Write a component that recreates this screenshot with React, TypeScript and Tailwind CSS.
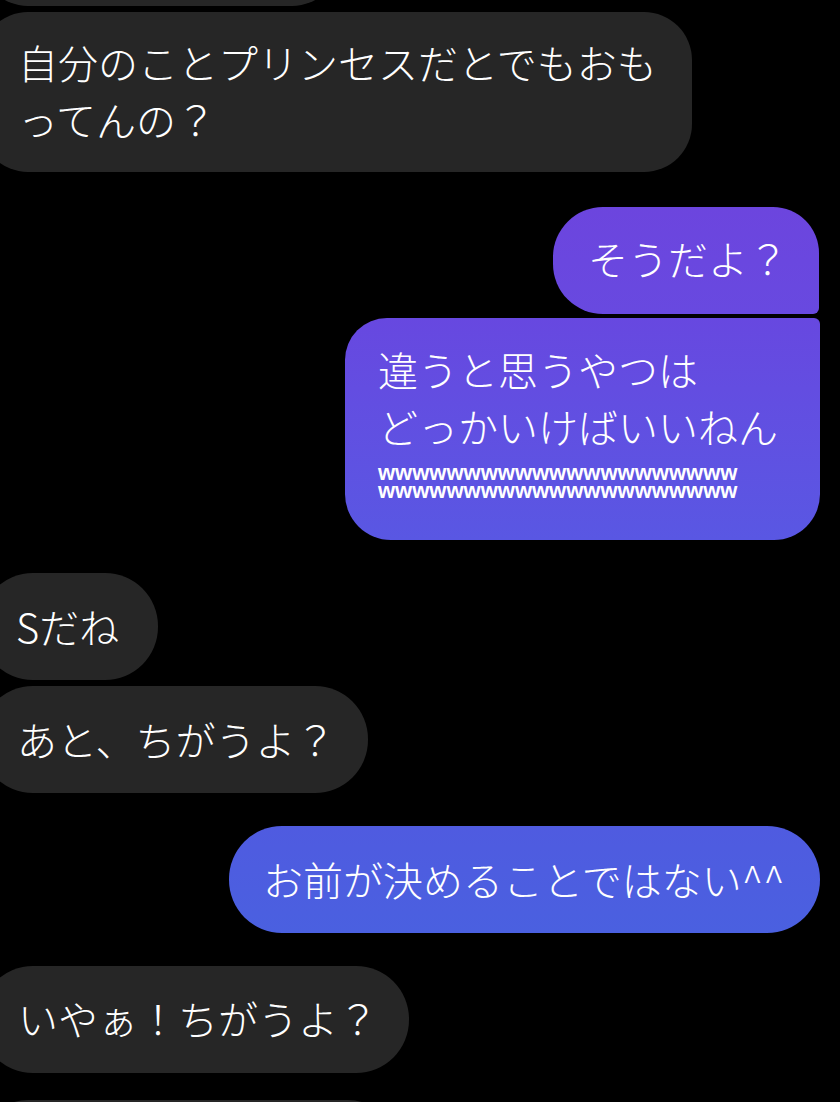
import React from "react";

const font = {
  fontFamily: '"Noto Sans CJK JP", "Noto Sans", sans-serif',
};

export default function App() {
  return (
    <div
      className="w-[840px] h-[1102px] bg-black overflow-hidden flex flex-col text-white text-[40px] leading-[57px] font-light"
      style={font}
    >
      {/* partial bubble at top */}
      <div className="self-start ml-[-20px] mt-[-94px] w-[360px] h-[100px] rounded-[48px] bg-[#262626] shrink-0" />

      {/* B */}
      <div className="self-start ml-[-20px] mt-[6px] w-[712px] h-[160px] shrink-0 rounded-[48px] bg-[#262626] pl-[38px] pt-[22px]">
        自分のことプリンセスだとでもおも
        <br />
        ってんの？
      </div>

      {/* C */}
      <div className="self-end mr-[21px] mt-[35px] w-[266px] h-[107px] shrink-0 flex items-center pl-[35px] pb-[4px] rounded-tl-[50px] rounded-bl-[50px] rounded-tr-[46px] rounded-br-[6px] bg-linear-to-b from-[#6c45de] to-[#6849e0] whitespace-nowrap">
        そうだよ？
      </div>

      {/* D */}
      <div className="self-end mr-[20px] mt-[4px] w-[475px] h-[222px] shrink-0 pl-[33px] pt-[23px] rounded-tl-[42px] rounded-tr-[6px] rounded-br-[46px] rounded-bl-[46px] bg-linear-to-b from-[#6748e0] to-[#5957e3]">
        <div>違うと思うやつは</div>
        <div>どっかいけばいいねん</div>
        <p
          className="mt-[9px] text-[22px] leading-[18px] font-bold tracking-[0px]"
          style={{ fontFamily: '"Liberation Sans", Arial, sans-serif' }}
        >
          wwwwwwwwwwwwwwwwwwwww
          <br />
          wwwwwwwwwwwwwwwwwwwww
        </p>
      </div>

      {/* E */}
      <div className="self-start ml-[-20px] mt-[33px] w-[178px] h-[107px] shrink-0 flex items-center pl-[36px] rounded-[53px] bg-[#262626] whitespace-nowrap">
        Sだね
      </div>

      {/* F */}
      <div className="self-start ml-[-20px] mt-[6px] w-[388px] h-[107px] shrink-0 flex items-center pl-[37px] rounded-[53px] bg-[#262626] whitespace-nowrap">
        あと、ちがうよ？
      </div>

      {/* G */}
      <div className="self-end mr-[20px] mt-[33px] w-[591px] h-[107px] shrink-0 flex items-center pl-[34px] rounded-[53px] bg-linear-to-b from-[#4f5be0] to-[#4a60e0] whitespace-nowrap">
        お前が決めることではない^^
      </div>

      {/* H */}
      <div className="self-start ml-[-20px] mt-[33px] w-[429px] h-[107px] shrink-0 flex items-center pl-[38px] pb-[2px] rounded-[53px] bg-[#262626] whitespace-nowrap">
        いやぁ！ちがうよ？
      </div>

      {/* partial bubble at bottom */}
      <div className="self-start ml-[-20px] mt-[27px] w-[416px] h-[100px] shrink-0 rounded-[48px] bg-[#262626]" />
    </div>
  );
}
